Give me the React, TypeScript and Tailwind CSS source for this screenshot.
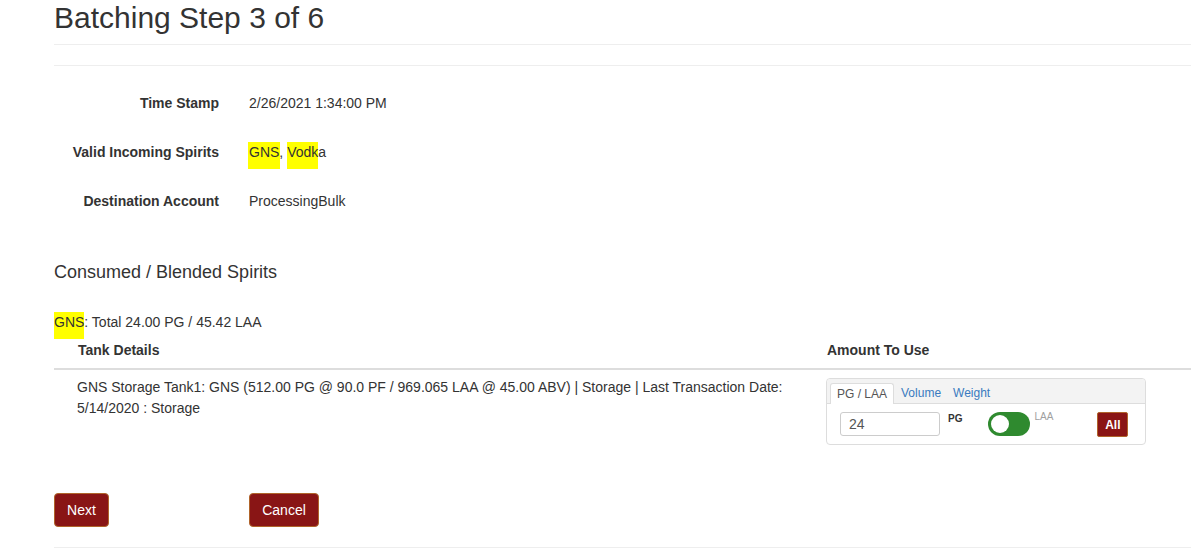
import React from "react";

const font = { fontFamily: '"Liberation Sans", Arial, Helvetica, sans-serif' };

function Marker({ children, className = "" }: { children: React.ReactNode; className?: string }) {
  return (
    <span
      className={`pt-[2px] pb-[9px] [box-decoration-break:clone] ${className}`}
    >
      {children}
    </span>
  );
}

function DetailRow({ label, children }: { label: string; children: React.ReactNode }) {
  return (
    <div className="flex h-[49px] leading-[20px]">
      <div className="w-[165px] text-right font-bold">{label}</div>
      <div className="ml-[30px]">{children}</div>
    </div>
  );
}

function AmountWidget() {
  return (
    <div className="w-[320px] h-[67px] border border-[#dddddd] rounded-[4px] bg-white">
      <div className="h-[25px] bg-[#f3f3f3] border-b border-[#dddddd] rounded-t-[4px] flex items-end pl-[3px] text-[12px] leading-[14px]">
        <div className="h-[21px] px-[6px] pt-[3px] bg-white border border-b-0 border-[#dddddd] rounded-t-[3px] text-[#555555] -mb-px">
          PG / LAA
        </div>
        <div className="h-[21px] pl-[7px] pr-[11px] pt-[4px] text-[#3a7bbf]">Volume</div>
        <div className="h-[21px] px-[1px] pt-[4px] text-[#3a7bbf]">Weight</div>
      </div>
      <div className="flex pl-[13px] pt-[8px]">
        <div className="w-[100px] h-[24px] border border-[#cccccc] rounded-[3px] pl-[8px] text-[14px] leading-[22px] text-[#555555]">
          24
        </div>
        <div className="ml-[8px] mt-[1px] text-[10px] font-bold leading-[12px] text-[#333333]">PG</div>
        <div className="ml-[26px] w-[42px] h-[24px] rounded-full bg-[#2f8a2f] flex items-center pl-[3px]">
          <div className="w-[18px] h-[18px] rounded-full bg-white" />
        </div>
        <div className="ml-[4px] -mt-[1px] text-[10px] leading-[12px] text-[#a0a0a0]">LAA</div>
        <div className="ml-[44px] w-[31px] h-[25px] rounded-[2px] bg-[#8a1515] border border-[#b0642a] text-white text-[12px] font-bold flex items-center justify-center">
          All
        </div>
      </div>
    </div>
  );
}

export default function App() {
  return (
    <div style={font} className="w-[1191px] h-[552px] overflow-hidden bg-white text-[#333333] text-[14px]">
      <div className="pl-[54px]">
        <div className="h-[45px] border-b border-[#eeeeee] pt-[1px]">
          <h1 className="text-[30px] leading-[33px] font-normal text-[#333333]">Batching Step 3 of 6</h1>
        </div>
        <div className="h-[21px] border-b border-[#eeeeee]" />

        <div className="mt-[27px]">
          <DetailRow label="Time Stamp">2/26/2021 1:34:00 PM</DetailRow>
          <DetailRow label="Valid Incoming Spirits">
            <Marker className="bg-[#ffff00] px-[1px] -mx-[1px]">GNS</Marker>,{" "}
            <Marker className="bg-[linear-gradient(to_right,#ffff00_80%,transparent_80%)]">Vodka</Marker>
          </DetailRow>
          <DetailRow label="Destination Account">ProcessingBulk</DetailRow>
        </div>

        <div className="mt-[22px] text-[18px] leading-[20px]">Consumed / Blended Spirits</div>

        <div className="mt-[30px] leading-[20px]">
          <Marker className="bg-[#ffff00]">GNS</Marker>: Total 24.00 PG / 45.42 LAA
        </div>

        <div className="flex border-b-2 border-[#dddddd] font-bold leading-[20px]">
          <div className="w-[772px] pl-[24px] py-[8px]">Tank Details</div>
          <div className="pl-[1px] py-[8px]">Amount To Use</div>
        </div>
        <div className="flex">
          <div className="w-[772px] pl-[23px] pr-[8px] pt-[7px] leading-[21px]">
            GNS Storage Tank1: GNS (512.00 PG @ 90.0 PF / 969.065 LAA @ 45.00 ABV) | Storage | Last Transaction
            Date: 5/14/2020 : Storage
          </div>
          <div className="pt-[8px] pb-[8px]">
            <AmountWidget />
          </div>
        </div>

        <div className="mt-[40px] flex">
          <button className="w-[55px] h-[34px] rounded-[4px] bg-[#891515] border border-[#b0642a] text-white text-[14px]">
            Next
          </button>
          <button className="ml-[140px] w-[70px] h-[34px] rounded-[4px] bg-[#891515] border border-[#b0642a] text-white text-[14px]">
            Cancel
          </button>
        </div>
        <div className="mt-[20px] border-b border-[#eeeeee]" />
      </div>
    </div>
  );
}
